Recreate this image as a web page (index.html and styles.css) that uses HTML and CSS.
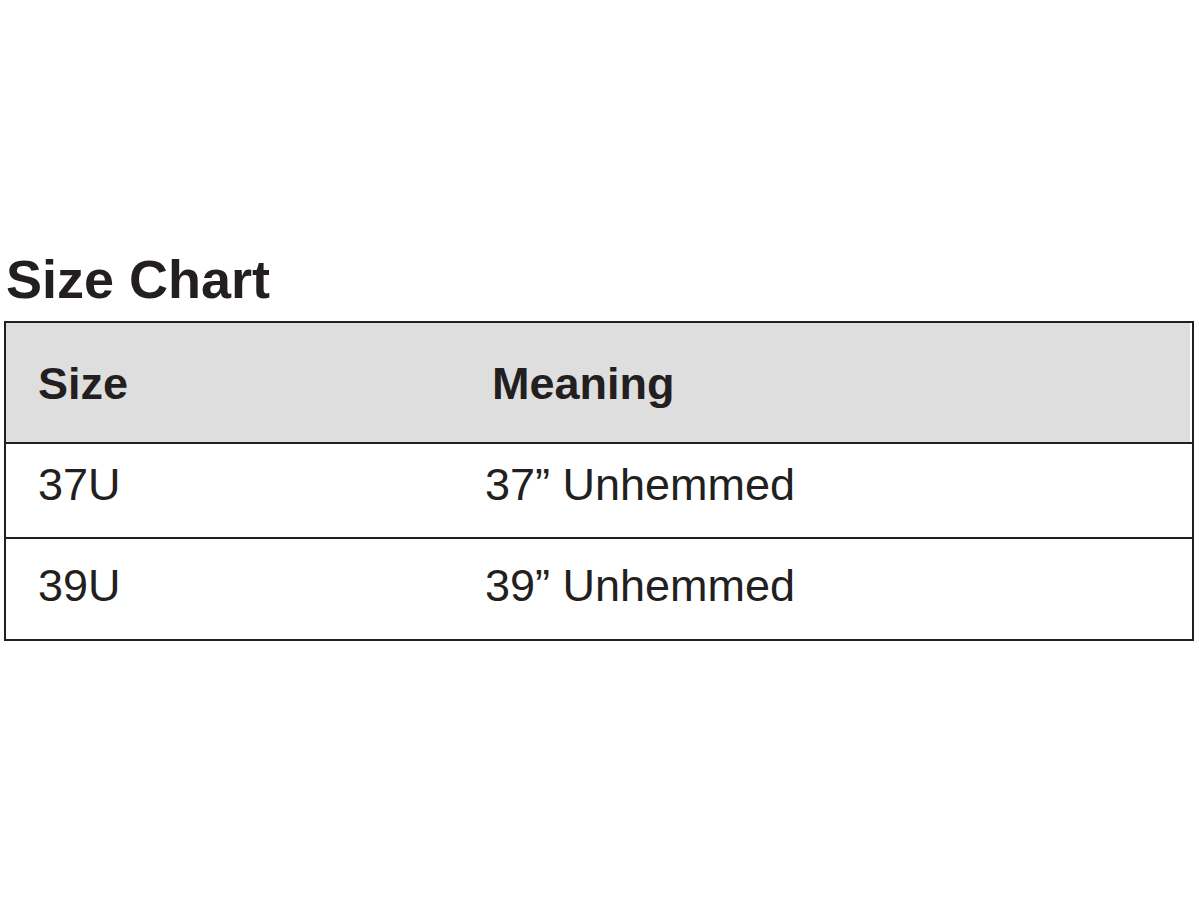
FILE: index.html
```html
<!DOCTYPE html>
<html lang="en">
<head>
<meta charset="utf-8">
<title>Size Chart</title>
<link rel="stylesheet" href="styles.css">
</head>
<body>
<main class="page">
  <h1 class="title">Size Chart</h1>
  <div class="chart">
    <div class="row head">
      <div class="cell c1">Size</div>
      <div class="cell c2">Meaning</div>
    </div>
    <div class="row r1">
      <div class="cell c1">37U</div>
      <div class="cell c2">37” Unhemmed</div>
    </div>
    <div class="row r2">
      <div class="cell c1">39U</div>
      <div class="cell c2">39” Unhemmed</div>
    </div>
  </div>
</main>
</body>
</html>
```
FILE: styles.css
```css
html, body {
  margin: 0;
  padding: 0;
  background: #ffffff;
}
body {
  font-family: "Liberation Sans", Arial, sans-serif;
  color: #231f20;
}
.page {
  padding: 252px 5px 0 4px;
}
.title {
  margin: 0 0 15px 2px;
  font-size: 54px;
  line-height: 54px;
  font-weight: 700;
}
.chart {
  width: 1186px;
  border: 2px solid #231f20;
}
.row {
  display: grid;
  grid-template-columns: 479px 1fr;
  font-size: 45px;
  line-height: 45px;
}
.row + .row {
  border-top: 2px solid #231f20;
}
.head {
  background: #dedede;
  font-weight: 700;
  padding: 38px 0 36px;
  margin-right: 2px;
}
.r1 {
  padding: 18px 0 30px;
}
.r2 {
  padding: 24px 0 31px;
}
.c1 {
  padding-left: 32px;
}
.head .c2 {
  padding-left: 7px;
}
```
